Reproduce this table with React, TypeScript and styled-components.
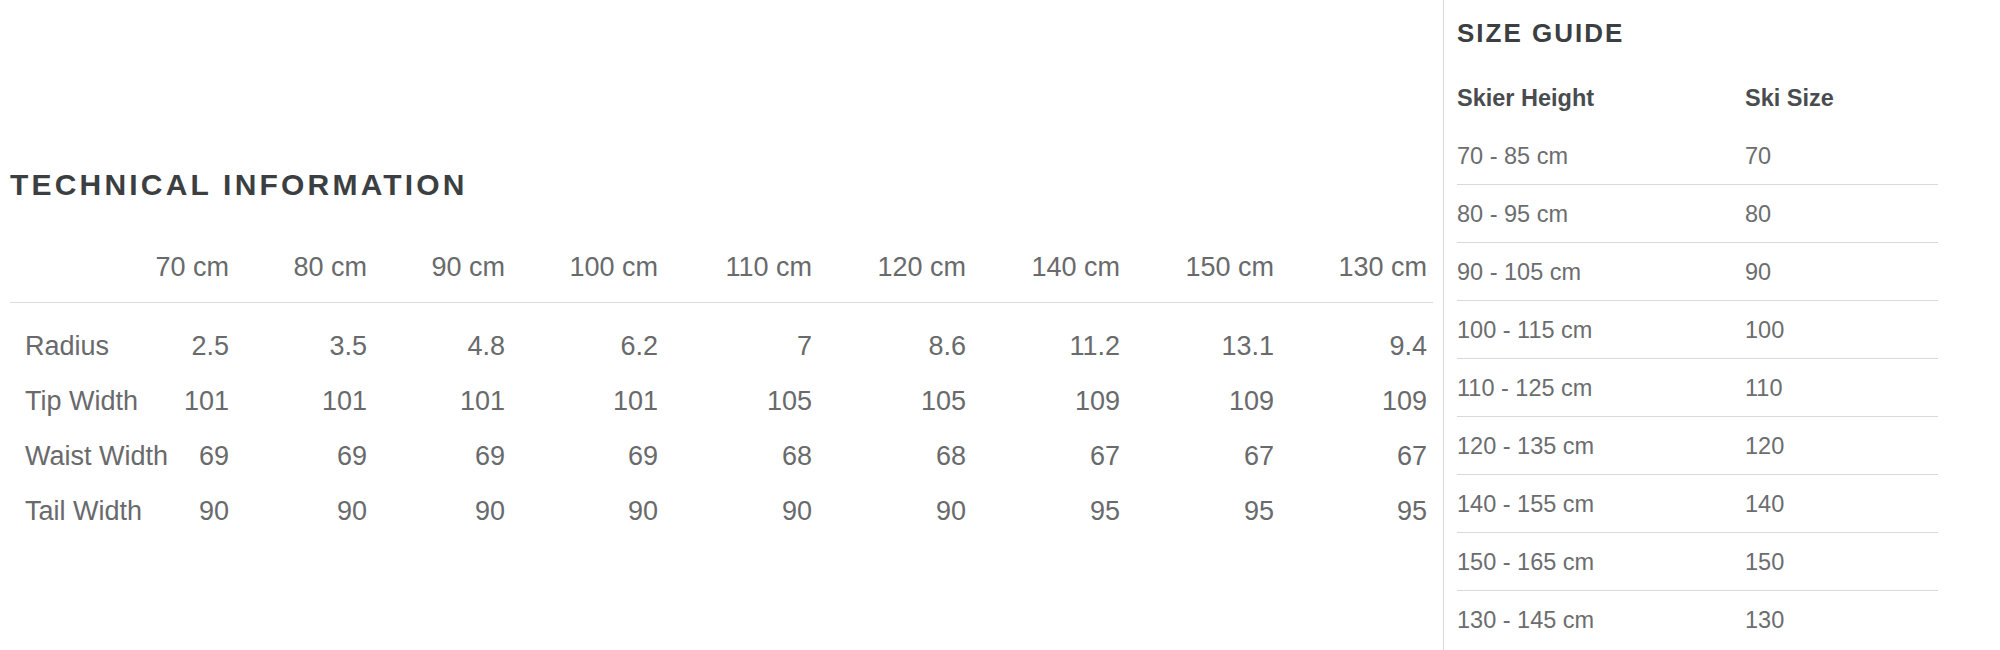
import React from 'react';
import styled, { createGlobalStyle } from 'styled-components';

const GlobalStyle = createGlobalStyle`
  html, body {
    margin: 0;
    padding: 0;
    background: #fff;
  }
  body {
    font-family: 'Liberation Sans', Arial, Helvetica, sans-serif;
    -webkit-font-smoothing: antialiased;
  }
`;

const lengths = ['70 cm', '80 cm', '90 cm', '100 cm', '110 cm', '120 cm', '140 cm', '150 cm', '130 cm'];

const specs = [
  { label: 'Radius', values: ['2.5', '3.5', '4.8', '6.2', '7', '8.6', '11.2', '13.1', '9.4'] },
  { label: 'Tip Width', values: ['101', '101', '101', '101', '105', '105', '109', '109', '109'] },
  { label: 'Waist Width', values: ['69', '69', '69', '69', '68', '68', '67', '67', '67'] },
  { label: 'Tail Width', values: ['90', '90', '90', '90', '90', '90', '95', '95', '95'] },
];

const sizes = [
  ['70 - 85 cm', '70'],
  ['80 - 95 cm', '80'],
  ['90 - 105 cm', '90'],
  ['100 - 115 cm', '100'],
  ['110 - 125 cm', '110'],
  ['120 - 135 cm', '120'],
  ['140 - 155 cm', '140'],
  ['150 - 165 cm', '150'],
  ['130 - 145 cm', '130'],
];

// label column + one column per ski length
const specColumns = '109px 110px 138px 138px 153px 154px 154px 154px 154px 153px';

const Page = styled.div`
  display: flex;
  align-items: stretch;
  min-height: 100vh;
`;

const TechSection = styled.section`
  flex: none;
  width: 1423px;
  margin-left: 10px;
  padding-top: 170px;
`;

const SizeSection = styled.aside`
  flex: none;
  width: 481px;
  margin-left: 10px;
  padding-left: 13px;
  border-left: 1px solid #dadada;
`;

const Heading = styled.h2<{ $size: number; $spacing: number }>`
  margin: 0;
  font-size: ${(p) => p.$size}px;
  line-height: 30px;
  letter-spacing: ${(p) => p.$spacing}px;
  font-weight: 700;
  text-transform: uppercase;
  color: #3b3f42;
`;

const SizeHeading = styled(Heading)`
  margin: 18px 0 20px;
`;

const SpecRow = styled.div`
  display: grid;
  grid-template-columns: ${specColumns};
  font-size: 27px;
  color: #686a6c;
`;

const SpecHead = styled(SpecRow)`
  margin-top: 52px;
  padding-bottom: 20px;
  line-height: 30px;
  border-bottom: 1px solid #dcdcdc;
`;

const SpecBody = styled.div`
  padding-top: 16px;
`;

const SpecLine = styled(SpecRow)`
  line-height: 55px;
`;

const Cell = styled.div`
  text-align: right;
  white-space: nowrap;
`;

const LabelCell = styled(Cell)`
  text-align: left;
  padding-left: 15px;
`;

const SizeRow = styled.div<{ $head?: boolean }>`
  display: grid;
  grid-template-columns: 288px 1fr;
  padding-top: ${(p) => (p.$head ? 3 : 2)}px;
  line-height: 55px;
  font-size: 23.5px;
  font-weight: ${(p) => (p.$head ? 700 : 400)};
  color: ${(p) => (p.$head ? '#484c4f' : '#6b6d6f')};
  border-bottom: 1px solid ${(p) => (p.$head ? 'transparent' : '#d9d9d9')};

  &:last-child {
    border-bottom-color: transparent;
  }
`;

const TechnicalInfo = () => (
  <TechSection>
    <Heading $size={30} $spacing={3.2}>Technical Information</Heading>
    <SpecHead>
      <div />
      {lengths.map((l, i) => (
        <Cell key={i}>{l}</Cell>
      ))}
    </SpecHead>
    <SpecBody>
      {specs.map((s) => (
        <SpecLine key={s.label}>
          <LabelCell>{s.label}</LabelCell>
          {s.values.map((v, i) => (
            <Cell key={i}>{v}</Cell>
          ))}
        </SpecLine>
      ))}
    </SpecBody>
  </TechSection>
);

const SizeGuide = () => (
  <SizeSection>
    <SizeHeading $size={26} $spacing={2}>Size Guide</SizeHeading>
    <div>
      <SizeRow $head>
        <div>Skier Height</div>
        <div>Ski Size</div>
      </SizeRow>
      {sizes.map(([height, size]) => (
        <SizeRow key={height}>
          <div>{height}</div>
          <div>{size}</div>
        </SizeRow>
      ))}
    </div>
  </SizeSection>
);

export default function App() {
  return (
    <>
      <GlobalStyle />
      <Page>
        <TechnicalInfo />
        <SizeGuide />
      </Page>
    </>
  );
}
